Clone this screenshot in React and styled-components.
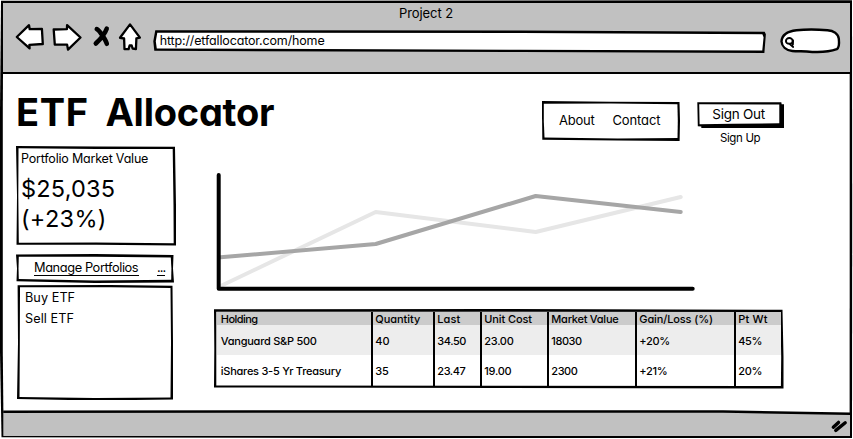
import React from "react";
import styled, { createGlobalStyle } from "styled-components";

const INK = "#000";
const CHROME = "#c1c1c1";

const GlobalStyle = createGlobalStyle`
  *, *::before, *::after { box-sizing: border-box; }
  body {
    margin: 0;
    background: #fff;
    color: ${INK};
    font-family: Inter, "Liberation Sans", sans-serif;
    font-feature-settings: "cv11";
  }
`;

/* A hand-drawn panel: an ink layer and a paper layer, each with its own wobbly outline.
   Outlines are lists of CSS polygon points. */
const Sketch = styled.div`
  position: relative;
  isolation: isolate;
  flex: none;
  background: ${INK};
  clip-path: polygon(${(p) => p.$ink});

  &::before {
    content: "";
    position: absolute;
    z-index: -1;
    inset: 0;
    background: ${(p) => p.$paper || "#fff"};
    clip-path: polygon(${(p) => p.$cut});
  }
`;

/* Distance from the right or bottom edge. */
const R = (n) => `calc(100% - ${n}px)`;

const Window = styled(Sketch)`
  display: flex;
  flex-direction: column;
  width: 853px;
  height: 439px;
`;

const Toolbar = styled.header`
  display: flex;
  flex-direction: column;
  flex: none;
  height: 70.4px;
  margin: 3.2px 3.3px 0 3.4px;
  background: ${CHROME};
  border-bottom: 2.6px solid ${INK};
`;

const WindowTitle = styled.div`
  height: 21px;
  padding-right: 1px;
  text-align: center;
  font-size: 13px;
  line-height: 21px;
  letter-spacing: -0.08px;
`;

const Controls = styled.div`
  display: flex;
  align-items: flex-start;
  padding-left: 11.6px;
`;

const NavIcons = styled.svg`
  flex: none;
  width: 128px;
  height: 32px;
  margin: -2.2px 10.3px 0 0;
  fill: #fff;
  stroke: ${INK};
  stroke-width: 2.3;
  stroke-linejoin: round;
  stroke-linecap: round;
`;

const AddressBar = styled(Sketch)`
  width: 612.6px;
  height: 22.8px;
  margin-top: 6.1px;
  padding-left: 6.4px;
  font-size: 12.5px;
  line-height: 21.8px;
  letter-spacing: -0.15px;
`;

const SearchSketch = styled.svg`
  flex: none;
  width: 62px;
  height: 28px;
  margin: 2.8px 0 0 13.7px;
  fill: none;
  stroke: ${INK};
  stroke-width: 2.4;
  stroke-linecap: round;
  stroke-linejoin: round;
`;

const Page = styled.main`
  display: flex;
  flex-direction: column;
  flex: 1;
  padding: 15.4px 0 0 16px;
`;

const Masthead = styled.div`
  display: flex;
  align-items: flex-start;
  height: 57px;
`;

const Brand = styled.h1`
  display: flex;
  flex: none;
  width: 525.5px;
  margin: 0;
  font-size: 38px;
  font-weight: 700;
  line-height: 46px;
`;

const BrandWord = styled.span`
  letter-spacing: ${(p) => p.$track}px;
  &:first-child { flex: none; width: 89.5px; }
`;

const Menu = styled(Sketch)`
  display: flex;
  gap: 18px;
  width: 138.5px;
  height: 40px;
  margin: 12px 17.3px 0 0;
  padding-left: 17.5px;
  font-size: 13px;
  line-height: 38px;
`;

const MenuItem = styled.span`
  letter-spacing: ${(p) => p.$track}px;
`;

const Account = styled.div`
  display: flex;
  flex-direction: column;
  width: 87px;
  margin-top: 13.3px;
`;

const SignOutButton = styled(Sketch)`
  height: 26px;
  padding-left: 15px;
  font-size: 13.5px;
  line-height: 24.8px;
  letter-spacing: -0.25px;
`;

const SignUpLink = styled.span`
  padding-left: 22.6px;
  font-size: 11.5px;
  line-height: 21px;
  letter-spacing: -0.35px;
`;

const Columns = styled.div`
  display: flex;
  gap: 37.5px;
`;

const Sidebar = styled.aside`
  width: 160px;
  flex: none;
`;

const ValueCard = styled(Sketch)`
  height: 99.8px;
  margin-bottom: 8.2px;
  padding: 1.8px 0 0 5px;
`;

const CardLabel = styled.div`
  font-size: 12.5px;
  line-height: 22px;
  letter-spacing: -0.2px;
`;

const CardFigure = styled.div`
  padding-top: 4.6px;
  font-size: 23.5px;
  line-height: 29.5px;
  letter-spacing: 0.2px;
  & + & { padding-top: 0; letter-spacing: 0.3px; }
`;

const ManageBar = styled(Sketch)`
  display: flex;
  align-items: flex-start;
  width: 158px;
  height: 29px;
  margin-bottom: 2px;
  padding: 5.5px 0 0 18px;
  font-size: 12.8px;
  line-height: 17px;
`;

const ManageLink = styled.span`
  width: 105px;
  height: 16.5px;
  margin-right: 18px;
  border-bottom: 1px solid ${INK};
  white-space: nowrap;
  letter-spacing: ${(p) => p.$track || 0}px;
  &:last-child { width: 8px; margin: 0; }
`;

const ActionList = styled(Sketch)`
  width: 156px;
  height: 115.5px;
  margin-left: 1px;
  padding: 1.8px 0 0 8px;
`;

const Action = styled.div`
  font-size: 12.7px;
  line-height: 21px;
  letter-spacing: 0.05px;
`;

const Main = styled.section`
  width: 572px;
`;

const Chart = styled.svg`
  display: block;
  width: 490px;
  height: 163px;
  fill: none;
  stroke-width: 4;
  stroke-linecap: round;
  stroke-linejoin: round;
`;

const TableSketch = styled(Sketch)`
  width: 570px;
  height: 80px;
  padding: 3px;
`;

const Row = styled.div`
  display: grid;
  grid-template-columns: 156px 62px 47px 67px 88px 99px 45px;
  height: ${(p) => p.$height}px;
  background: ${(p) => p.$fill};
  font-size: 11px;
  font-weight: 450;
  line-height: ${(p) => p.$line}px;
`;

const Cell = styled.div`
  padding-left: 2.8px;
  border-right: 2px solid ${INK};
  white-space: nowrap;
  letter-spacing: ${(p) => p.$track}px;
  &:first-child { padding-left: 4.3px; }
  &:last-child { border-right: 0; }
`;

const StatusBar = styled(Sketch)`
  display: flex;
  justify-content: flex-end;
  height: 26px;
  margin: 0 3px 3px 3.2px;
`;

const Grip = styled.svg`
  width: 20px;
  height: 18px;
  margin: 8px 0 0 0;
  fill: none;
  stroke: ${INK};
  stroke-width: 3.4;
  stroke-linecap: round;
`;

const columns = ["Holding", "Quantity", "Last", "Unit Cost", "Market Value", "Gain/Loss (%)", "Pt Wt"];
const headTrack = [-0.55, -0.05, 0.1, -0.1, -0.25, -0.12, 0.15];
const holdings = [
  ["Vanguard S&P 500", "40", "34.50", "23.00", "18030", "+20%", "45%"],
  ["iShares 3-5 Yr Treasury", "35", "23.47", "19.00", "2300", "+21%", "20%"],
];
const valueTrack = [-0.25, -0.1, -0.45, -0.3, -0.45, -0.3, -0.4];

function NavigationIcons() {
  return (
    <NavIcons viewBox="15 22 128 32">
      <path d="M16.8 37 29 25.200l.7 4 12.2-.4.9 15.2-13.4.8.2 3.600Z" />
      <path d="m53.700 29.500 13.200-.3.2-4.100 13.400 12.400L68 49.600l-.9-5H54.800Z" />
      <path d="M96.800 29.200c2.400 1 9 10.500 10 14.600M106.700 28.700c-1.800 5-7.400 11.500-10.900 14.800" strokeWidth="4.600" />
      <path d="m130 24.400 9.900 13.200-3.500.7-.5 10.800-3.300-.6-.9-3h-2.100l-1 3.600h-4.100l-.4-10.600-4.100-.7Z" />
    </NavIcons>
  );
}

function SearchField() {
  return (
    <SearchSketch viewBox="780 27 62 28">
      <path
        fill="#fff"
        d="M781.500 41.500c.5-7 7-10.300 15-11.200 10-1.200 20-1 31-.1 6 .4 10.600 3.500 11.300 8.500.4 3.500.9 8.700-2 10.500-7 2.500-20 3.200-30 2.300-5-.5-9 .1-14.500-.5-6.300-.8-10.400-4.500-10.800-9.500Z"
      />
      <ellipse cx="789.300" cy="40.900" rx="3.400" ry="2.900" strokeWidth="1.900" />
      <path d="m790 44.300 3.200 2.600M793 40.500l-.1 4" strokeWidth="1.900" />
    </SearchSketch>
  );
}

export default function App() {
  return (
    <>
      <GlobalStyle />
      <Window
        $ink={`1px .8px, ${R(1)} .3px, ${R(0.8)} 50%, ${R(1)} ${R(1)}, 40% ${R(1)}, 1.5px ${R(1.8)}, 0 80%, 0 25%`}
        $cut={`3.4px 3.2px, ${R(3.3)} 3.2px, ${R(3.3)} 50%, ${R(3.4)} ${R(3.4)}, 3.6px ${R(3.8)}, 2.8px 80%, 2.8px 25%`}
      >
        <Toolbar>
          <WindowTitle>Project 2</WindowTitle>
          <Controls>
            <NavigationIcons />
            <AddressBar
              $ink={`2px 0, 60% .2px, ${R(1.2)} 1.5px, 100% 4px, ${R(1.5)} 100%, 60% ${R(1)}, 1px ${R(2.3)}, 0 11px`}
              $cut={`4px 2.4px, 60% 2.8px, ${R(3.5)} 4px, ${R(2.3)} 7px, ${R(3.6)} ${R(2.6)}, 60% ${R(3.4)}, 3.5px ${R(4.6)}, 2.5px 11px`}
            >
              http://etfallocator.com/home
            </AddressBar>
            <SearchField />
          </Controls>
        </Toolbar>

        <Page>
          <Masthead>
            <Brand>
              <BrandWord $track={0.6}>ETF</BrandWord>
              <BrandWord $track={-0.25}>Allocator</BrandWord>
            </Brand>
            <Menu
              $ink={`0 0, 50% .8px, ${R(0.5)} 1px, 100% 50%, ${R(0.4)} 100%, 55% ${R(0.5)}, .8px ${R(1.2)}, .6px 50%`}
              $cut={`2.3px 2.7px, 50% 2.6px, ${R(2.6)} 3.3px, ${R(2.2)} 50%, ${R(2.5)} ${R(3)}, 55% ${R(2.4)}, 3px ${R(3.4)}, 2.3px 50%`}
            >
              <MenuItem $track={-0.25}>About</MenuItem>
              <MenuItem $track={-0.1}>Contact</MenuItem>
            </Menu>
            <Account>
              <SignOutButton
                $ink={`0 0, ${R(3)} 0, ${R(2.6)} 2px, 100% 2px, 100% 100%, 4px 100%, 4px ${R(1.8)}, .5px ${R(2)}`}
                $cut={`1.9px 2px, ${R(5)} 2.2px, ${R(5)} ${R(5)}, 40% ${R(4.5)}, 2.3px ${R(4)}`}
              >
                Sign Out
              </SignOutButton>
              <SignUpLink>Sign Up</SignUpLink>
            </Account>
          </Masthead>

          <Columns>
            <Sidebar>
              <ValueCard
                $ink={`0 0, 50% .5px, ${R(1)} .8px, 100% 60%, 100% ${R(0.2)}, 50% ${R(1)}, .5px ${R(1)}, 1px 50%`}
                $cut={`2.5px 2.4px, 50% 3px, ${R(3.3)} 3px, ${R(2.5)} 60%, ${R(2.3)} ${R(2.5)}, 50% ${R(3.2)}, 2.8px ${R(3)}, 2.3px 50%`}
              >
                <CardLabel>Portfolio Market Value</CardLabel>
                <CardFigure>$25,035</CardFigure>
                <CardFigure>(+23%)</CardFigure>
              </ValueCard>
              <ManageBar
                $ink={`0 .6px, 50% 0, ${R(0.5)} 1px, ${R(1)} 50%, 100% ${R(0.5)}, 50% 100%, .5px ${R(1.8)}, 1px 50%`}
                $cut={`2.8px 2.8px, 50% 2.7px, ${R(3.2)} 3.5px, ${R(2.6)} 50%, ${R(2.8)} ${R(3.2)}, 50% ${R(2.5)}, 2.8px ${R(4)}, 2.5px 50%`}
              >
                <ManageLink $track={-0.4}>Manage Portfolios</ManageLink>
                <ManageLink $track={-0.9}>...</ManageLink>
              </ManageBar>
              <ActionList
                $ink={`.6px .3px, 60% 0, ${R(0.5)} .8px, 100% 50%, 100% ${R(1)}, 50% 100%, 0 ${R(1.5)}, 1px 50%`}
                $cut={`3px 2.3px, 60% 2.3px, ${R(2.5)} 3px, ${R(2)} 50%, ${R(2.5)} ${R(3)}, 50% ${R(2.4)}, 2.5px ${R(3.5)}, 2.8px 50%`}
              >
                <Action>Buy ETF</Action>
                <Action>Sell ETF</Action>
              </ActionList>
            </Sidebar>

            <Main>
              <Chart viewBox="214.3 146 490 163">
                <path stroke="#e6e6e6" d="m221 286 155-74 160 20 145-35" />
                <path stroke="#a6a6a6" d="m221 257.3 155-13.3 160-48 145 16" />
                <path stroke={INK} d="M219 175v113.800h474" />
              </Chart>
              <TableSketch
                $ink={`.5px .3px, 50% 0, ${R(1)} .8px, 100% 60%, 100% ${R(0.5)}, 50% ${R(1)}, .5px ${R(1.5)}, .8px 50%`}
                $cut={`2.8px 2.8px, ${R(3)} 3px, ${R(2.3)} 60%, ${R(2.6)} ${R(3)}, 50% ${R(3.3)}, 2.8px ${R(3.5)}`}
              >
                <Row $fill="#cbcbcb" $height={13} $line={14.5}>
                  {columns.map((name, i) => (
                    <Cell key={name} $track={headTrack[i]}>{name}</Cell>
                  ))}
                </Row>
                {holdings.map((values, r) => (
                  <Row key={values[0]} $fill={r === 0 ? "#ededed" : "transparent"} $height={30} $line={32}>
                    {values.map((value, i) => (
                      <Cell key={i} $track={valueTrack[i]}>{value}</Cell>
                    ))}
                  </Row>
                ))}
              </TableSketch>
            </Main>
          </Columns>
        </Page>

        <StatusBar
          $paper={CHROME}
          $ink={`0 .5px, 45% .2px, 85% .2px, 100% 2.5px, 100% 100%, 0 100%`}
          $cut={`0 3px, 45% 2.7px, 85% 2.7px, 100% 5px, 100% 100%, 0 100%`}
        >
          <Grip viewBox="830 419 20 18">
            <path d="m833.300 428.200 5.200-4.800M835.800 431.400l9.400-7.600" />
          </Grip>
        </StatusBar>
      </Window>
    </>
  );
}
